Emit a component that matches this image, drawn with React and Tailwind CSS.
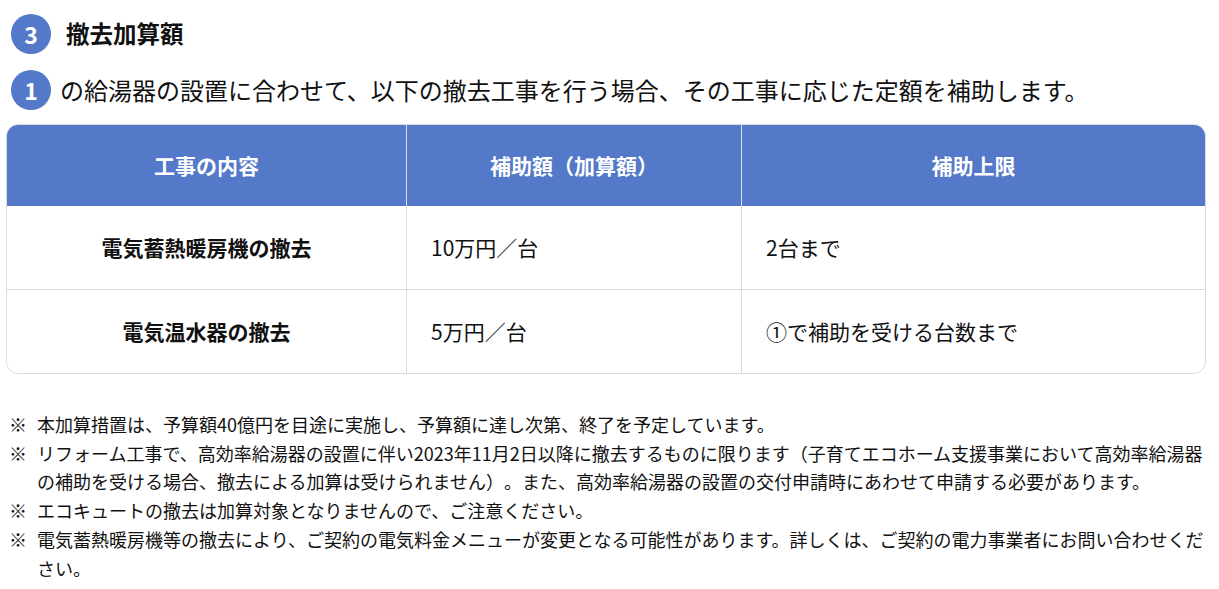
import React from 'react';

const font = { fontFamily: '"Noto Sans CJK JP", "Noto Sans", sans-serif' };

const NumBadge = ({ n }) => (
  <span className="flex h-10 w-10 shrink-0 items-center justify-center rounded-full bg-[#5479c8] text-[23px] font-bold text-white">
    {n}
  </span>
);

const rows = [
  { item: '電気蓄熱暖房機の撤去', amount: '10万円／台', limit: '2台まで' },
  { item: '電気温水器の撤去', amount: '5万円／台', limit: '①で補助を受ける台数まで' },
];

const notes = [
  '本加算措置は、予算額40億円を目途に実施し、予算額に達し次第、終了を予定しています。',
  'リフォーム工事で、高効率給湯器の設置に伴い2023年11月2日以降に撤去するものに限ります（子育てエコホーム支援事業において高効率給湯器の補助を受ける場合、撤去による加算は受けられません）。また、高効率給湯器の設置の交付申請時にあわせて申請する必要があります。',
  'エコキュートの撤去は加算対象となりませんので、ご注意ください。',
  '電気蓄熱暖房機等の撤去により、ご契約の電気料金メニューが変更となる可能性があります。詳しくは、ご契約の電力事業者にお問い合わせください。',
];

export default function App() {
  return (
    <div className="min-h-screen bg-white px-[6px] pt-[14px] text-[#111] [text-spacing-trim:space-all]" style={font}>
      <div className="flex items-center gap-[15px] pl-[5px]">
        <NumBadge n="3" />
        <h2 className="text-[23.5px] font-bold leading-none">撤去加算額</h2>
      </div>

      <div className="mt-[16px] flex items-center gap-[9px] pl-[5px]">
        <NumBadge n="1" />
        <p className="text-[24px] leading-none">
          の給湯器の設置に合わせて、以下の撤去工事を行う場合、その工事に応じた定額を補助します。
        </p>
      </div>

      <div className="mt-[14px] w-[1200px] overflow-hidden rounded-xl border border-[#dcdcdc]">
        <div className="grid grid-cols-[400px_335px_1fr] bg-[#5479c8] text-[21px] font-bold text-white">
          <div className="flex h-[81px] items-center justify-center border-r border-[#dcdcdc]">工事の内容</div>
          <div className="flex h-[81px] items-center justify-center border-r border-[#dcdcdc]">補助額（加算額）</div>
          <div className="flex h-[81px] items-center justify-center">補助上限</div>
        </div>
        {rows.map((r, i) => (
          <div
            key={r.item}
            className={`grid grid-cols-[400px_335px_1fr] text-[21px] ${i > 0 ? 'border-t border-[#dcdcdc]' : ''}`}
          >
            <div className="flex h-[83px] items-center justify-center border-r border-[#dcdcdc] font-bold">{r.item}</div>
            <div className="flex h-[83px] items-center border-r border-[#dcdcdc] px-6">{r.amount}</div>
            <div className="flex h-[83px] items-center px-6">{r.limit}</div>
          </div>
        ))}
      </div>

      <ul className="mt-[36px] text-[18px] leading-[28.7px]">
        {notes.map((t) => (
          <li key={t} className="flex">
            <span className="w-[31px] shrink-0 pl-[3px]">※</span>
            <span className="w-[1170px]">{t}</span>
          </li>
        ))}
      </ul>
    </div>
  );
}
